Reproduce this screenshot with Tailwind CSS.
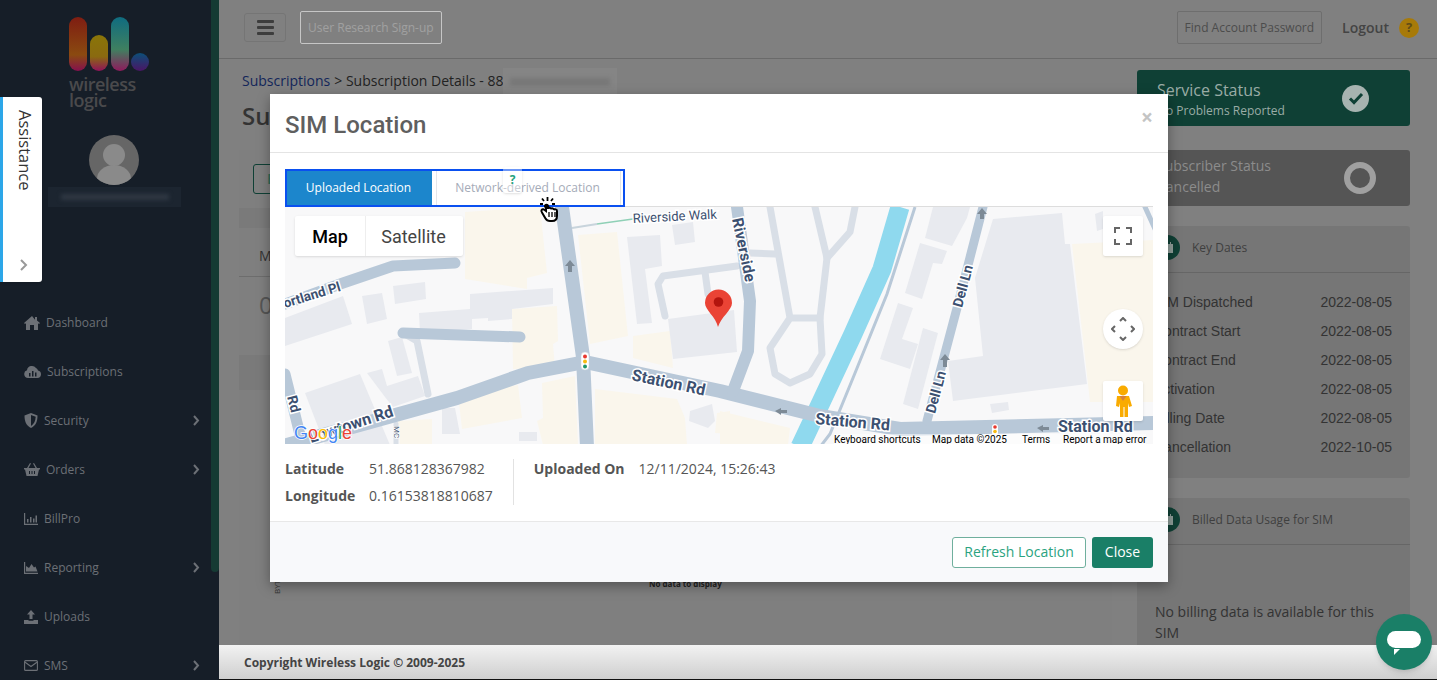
<!DOCTYPE html>
<html lang="en">
<head>
    <meta charset="UTF-8">
    <title>SIM Location</title>
    <script src="https://cdn.jsdelivr.net/npm/@tailwindcss/browser@4"></script>
</head>
<body class="font-['Open_Sans',sans-serif] text-[14px] text-[#333] bg-[#808080]">
<div class="relative flex w-[1437px] h-[680px] overflow-hidden">

    <!-- Sidebar -->
    <aside class="w-[219px] h-full shrink-0 bg-[#161e28] flex flex-col items-stretch relative overflow-hidden">
        <div class="absolute right-0 top-0 w-[8px] h-[572px] bg-[#153a33] rounded-b"></div>
        <div class="pt-[17px] pl-[69px] h-[135px] shrink-0">
            <svg class="block" width="80" height="54" viewBox="0 0 80 54">
                <defs>
                    <linearGradient id="b1" x1="0" y1="0" x2="0" y2="1"><stop offset="0" stop-color="#7f1d12"/><stop offset=".7" stop-color="#8a4a10"/><stop offset="1" stop-color="#85104e"/></linearGradient>
                    <linearGradient id="b2" x1="0" y1="0" x2="0" y2="1"><stop offset="0" stop-color="#8a7508"/><stop offset=".6" stop-color="#8a6a10"/><stop offset="1" stop-color="#90125a"/></linearGradient>
                    <linearGradient id="b3" x1="0" y1="0" x2="0" y2="1"><stop offset="0" stop-color="#0f6c80"/><stop offset=".6" stop-color="#3f8060"/><stop offset="1" stop-color="#8f1a5c"/></linearGradient>
                    <linearGradient id="b4" x1="0" y1="0" x2="0" y2="1"><stop offset="0" stop-color="#0c4f78"/><stop offset="1" stop-color="#4a1565"/></linearGradient>
                </defs>
                <rect x="0" y="0" width="18" height="54" rx="9" fill="url(#b1)"/>
                <rect x="21" y="18" width="18" height="36" rx="9" fill="url(#b2)"/>
                <rect x="42" y="0" width="18" height="54" rx="9" fill="url(#b3)"/>
                <circle cx="71" cy="45" r="9" fill="url(#b4)"/>
            </svg>
            <div class="text-[18px] leading-[16px] font-semibold text-[#4a4a4c] tracking-[-0.5px] mt-[5px]">wireless<br>logic</div>
        </div>
        <div class="flex justify-center pl-[9px] shrink-0">
            <div class="w-[50px] h-[50px] rounded-full bg-[#666] overflow-hidden">
                <svg width="50" height="50" viewBox="0 0 50 50"><circle cx="25" cy="20" r="11" fill="#8a8a8a"/><ellipse cx="25" cy="44" rx="17" ry="14" fill="#8a8a8a"/></svg>
            </div>
        </div>
        <div class="ml-[48px] w-[133px] shrink-0 mt-[2px] h-[20px] bg-[#1c2530] flex items-center justify-center">
            <div class="w-[108px] h-[6px] bg-[#2f3843] blur-[2px]"></div>
        </div>

        <nav class="mt-[91px] shrink-0 text-[12px] text-[#6c7076]">
            <a class="flex items-center h-[49px] pl-[24px] gap-[6px]">
                <svg width="16" height="14" viewBox="0 0 16 14" fill="#6c7076"><path d="M8 0 0 7l1 1 1-.8V14h4V9h4v5h4V7.200l1 .8 1-1-3-2.600V1h-2v2.700z"/></svg>
                <span>Dashboard</span>
            </a>
            <a class="flex items-center h-[49px] pl-[24px] gap-[6px]">
                <svg width="17" height="13" viewBox="0 0 17 13" fill="#6c7076"><path d="M4 13a4 4 0 0 1-1-7.800A5 5 0 0 1 12 3a4 4 0 0 1 2 2.500A3.800 3.800 0 0 1 13.500 13z"/><path d="M5 8h1.500v3.500H5zM8 6h1.500v5.500H8zM11 7.500h1.500v4H11z" fill="#161e28"/></svg>
                <span>Subscriptions</span>
            </a>
            <a class="flex items-center h-[49px] pl-[24px] gap-[6px] relative">
                <svg width="14" height="15" viewBox="0 0 14 15"><path d="M7 0 .5 2.500C.5 8 2 12.500 7 15c5-2.500 6.500-7 6.500-12.500z" fill="#6c7076"/><path d="M7 2v11c3-2 4.500-5 4.700-9.200z" fill="#161e28"/></svg>
                <span>Security</span>
                <svg class="absolute left-[192px]" width="8" height="11" viewBox="0 0 8 11"><path d="m2 1 4 4.500L2 10" fill="none" stroke="#6c7076" stroke-width="2"/></svg>
            </a>
            <a class="flex items-center h-[49px] pl-[24px] gap-[6px] relative">
                <svg width="16" height="13" viewBox="0 0 16 13" fill="#6c7076"><path d="M0 5h16v1.500h-1L13.500 13h-11L1 6.500H0zM3 5l3-5 1 .6L4.500 5zM13 5l-3-5-1 .6L11.500 5z"/><path d="M5 8h1v3H5zM7.500 8h1v3h-1zM10 8h1v3h-1z" fill="#161e28"/></svg>
                <span>Orders</span>
                <svg class="absolute left-[192px]" width="8" height="11" viewBox="0 0 8 11"><path d="m2 1 4 4.500L2 10" fill="none" stroke="#6c7076" stroke-width="2"/></svg>
            </a>
            <a class="flex items-center h-[49px] pl-[24px] gap-[6px]">
                <svg width="14" height="12" viewBox="0 0 14 12" fill="#6c7076"><path d="M0 0h1.200v10.800H14V12H0zM3 6h1.500v3.500H3zM6 4h1.500v5.500H6zM9 5.500h1.500v4H9zM11.500 2.500H13v7h-1.500z"/></svg>
                <span>BillPro</span>
            </a>
            <a class="flex items-center h-[49px] pl-[24px] gap-[6px] relative">
                <svg width="14" height="12" viewBox="0 0 14 12" fill="#6c7076"><path d="M0 0h1.200v10.800H14V12H0zM2 9.500V4l3 2 2.500-4L10 5.500l1.500-1 2 5z"/></svg>
                <span>Reporting</span>
                <svg class="absolute left-[192px]" width="8" height="11" viewBox="0 0 8 11"><path d="m2 1 4 4.500L2 10" fill="none" stroke="#6c7076" stroke-width="2"/></svg>
            </a>
            <a class="flex items-center h-[49px] pl-[24px] gap-[6px]">
                <svg width="14" height="14" viewBox="0 0 14 14" fill="#6c7076"><path d="M7 0 11 4.500H8.500V9h-3V4.500H3zM0 10h4.500v.8h5V10H14v4H0z"/></svg>
                <span>Uploads</span>
            </a>
            <a class="flex items-center h-[49px] pl-[24px] gap-[6px] relative">
                <svg width="14" height="11" viewBox="0 0 14 11" fill="none" stroke="#6c7076" stroke-width="1.100"><rect x=".6" y=".6" width="12.800" height="9.800" rx="1"/><path d="m.8 2 6.200 4.500L13.200 2"/></svg>
                <span>SMS</span>
                <svg class="absolute left-[192px]" width="8" height="11" viewBox="0 0 8 11"><path d="m2 1 4 4.500L2 10" fill="none" stroke="#6c7076" stroke-width="2"/></svg>
            </a>
        </nav>
    </aside>

    <!-- Main -->
    <div class="flex-1 flex flex-col min-w-0">
        <header class="h-[59px] shrink-0 border-b border-[#6a6a6a] flex items-center pl-[25px] pr-[18px] pb-[3px]">
            <button class="w-[42px] h-[29px] border border-[#757575] rounded-[3px] flex items-center justify-center">
                <svg width="17" height="15" viewBox="0 0 17 15" fill="#3d3d3d"><rect width="17" height="3" rx="1"/><rect y="6" width="17" height="3" rx="1"/><rect y="12" width="17" height="3" rx="1"/></svg>
            </button>
            <div class="ml-[14px] h-[33px] px-[7px] border border-[#c6c6c6] rounded-[2px] flex items-center text-[12px] text-[#a0a0a0]">User Research Sign-up</div>
            <div class="ml-auto h-[33px] px-[7px] border border-[#6e6e6e] rounded-[2px] flex items-center text-[12px] text-[#4c4c4c]">Find Account Password</div>
            <span class="ml-[20px] text-[14px] font-semibold text-[#444]">Logout</span>
            <span class="ml-[10px] w-[20px] h-[20px] rounded-full bg-[#a77a09] text-[#5f4c18] text-[13px] font-bold flex items-center justify-center">?</span>
        </header>

        <div class="flex-1 flex min-h-0 overflow-hidden pl-[20px] pr-[27px]">
            <div class="w-[873px] shrink-0">
                <div class="pt-[12px] pl-[3px] text-[14px] leading-[20px] text-[#222] flex">
                    <span class="text-[#13265a]">Subscriptions</span><span class="ml-[4px]">&gt; Subscription Details - 88</span>
                    <span class="w-[114px] h-[27px] -mt-[3px] bg-[#858585] flex items-center justify-center"><span class="w-[100px] h-[8px] bg-[#777] blur-[2px]"></span></span>
                </div>
                <div class="pl-[3px] mt-[5px] text-[24px] leading-[32px] font-semibold text-[#333]">Subscription</div>
                <div class="mt-[18px] bg-[#7a7a7a]">
                    <div class="h-[58px] bg-[#7f7f7f] flex items-center pl-[14px]">
                        <span class="w-[60px] h-[30px] border border-[#0f4035] rounded-[3px] pl-[13px] leading-[28px] text-[#2f6a58] font-semibold">E</span>
                    </div>
                    <div class="mt-[20px] h-[127px] bg-[#7f7f7f]">
                        <div class="h-[49px] pt-[6px] pl-[20px] border-b border-[#6d6d6d] flex items-center text-[14px] text-[#333]">Mobile</div>
                        <div class="pt-[12px] pl-[20px] text-[24px] leading-[32px] text-[#555]">0</div>
                    </div>
                    <div class="mt-[35px] h-[256px] bg-[#7f7f7f] relative">
                        <span class="absolute left-[26px] top-[187px] text-[8px] leading-[11px] text-[#333] -rotate-90">BYTES</span>
                        <span class="absolute left-[410px] top-[188px] text-[8px] font-bold text-[#222]">No data to display</span>
                    </div>
                </div>
            </div>
            <div class="w-[273px] ml-[25px] shrink-0 flex flex-col pt-[11px]">
                <div class="h-[56px] shrink-0 bg-[#0f4035] rounded-[3px] flex items-center pl-[20px] pr-[41px] justify-between">
                    <div class="text-[#9aaca6] pt-[4px]">
                        <div class="text-[16px] leading-[21px]">Service Status</div>
                        <div class="text-[12px] leading-[19px]">No Problems Reported</div>
                    </div>
                    <span class="w-[27px] h-[27px] rounded-full bg-[#a7b3b0] flex items-center justify-center">
                        <svg width="16" height="13" viewBox="0 0 16 13"><path d="m2 6.500 4 4 8-8.500" fill="none" stroke="#0f4035" stroke-width="3"/></svg>
                    </span>
                </div>
                <div class="h-[56px] mt-[24px] shrink-0 bg-[#555] rounded-[3px] flex items-center pl-[20px] pr-[34px] justify-between">
                    <div class="text-[#8c8c8c] text-[14px] leading-[21px] pb-[4px]">
                        <div>Subscriber Status</div>
                        <div>Cancelled</div>
                    </div>
                    <span class="w-[32px] h-[32px] rounded-full border-[6px] border-[#a0a0a0]"></span>
                </div>
                <div class="h-[252px] mt-[20px] shrink-0 bg-[#767676] rounded-[3px]">
                    <div class="h-[47px] pb-[3px] border-b border-[#666] flex items-center pl-[18px] gap-[12px]">
                        <span class="w-[25px] h-[25px] rounded-full bg-[#0f4035] flex items-center justify-center">
                            <svg width="10" height="11" viewBox="0 0 10 11" fill="#8f9f9a"><path d="M0 2h10v9H0zM2 0h1v2H2zM7 0h1v2H7z"/></svg>
                        </span>
                        <span class="text-[12px] text-[#3f3f3f]">Key Dates</span>
                    </div>
                    <div class="pt-[15px] pl-[17px] pr-[18px] font-['Liberation_Sans',sans-serif] text-[14px] text-[#333] leading-[29px]">
                        <div class="flex justify-between"><span>SIM Dispatched</span><span>2022-08-05</span></div>
                        <div class="flex justify-between"><span>Contract Start</span><span>2022-08-05</span></div>
                        <div class="flex justify-between"><span>Contract End</span><span>2022-08-05</span></div>
                        <div class="flex justify-between"><span>Activation</span><span>2022-08-05</span></div>
                        <div class="flex justify-between"><span>Billing Date</span><span>2022-08-05</span></div>
                        <div class="flex justify-between"><span>Cancellation</span><span>2022-10-05</span></div>
                    </div>
                </div>
                <div class="h-[180px] mt-[20px] shrink-0 bg-[#767676] rounded-[3px]">
                    <div class="h-[47px] pb-[3px] border-b border-[#666] flex items-center pl-[18px] gap-[12px]">
                        <span class="w-[25px] h-[25px] rounded-full bg-[#0f4035] flex items-center justify-center">
                            <svg width="10" height="11" viewBox="0 0 10 11" fill="#8f9f9a"><path d="M0 2h10v9H0zM2 0h1v2H2zM7 0h1v2H7z"/></svg>
                        </span>
                        <span class="text-[12px] text-[#3f3f3f]">Billed Data Usage for SIM</span>
                    </div>
                    <p class="pt-[56px] px-[18px] leading-[21px] text-[#333]">No billing data is available for this SIM</p>
                </div>
            </div>
        </div>

        <footer class="h-[35px] shrink-0 bg-linear-to-b from-[#f2f2f2] to-[#cfcfcf] border-b border-[#111] pl-[25px] pt-[1px] flex items-center text-[12px] font-bold text-[#444]">Copyright Wireless Logic © 2009-2025</footer>
    </div>

    <!-- Assistance tab -->
    <div class="absolute left-0 top-[97px] w-[42px] h-[185px] bg-white rounded-r-[3px] border-l-[3px] border-[#2ca6e8] shadow">
        <div class="absolute left-[9px] top-[13px] text-[16.500px] text-[#333] [writing-mode:vertical-rl]">Assistance</div>
        <svg class="absolute left-[16px] top-[162px]" width="9" height="12" viewBox="0 0 9 12"><path d="m2 1 5 5-5 5" fill="none" stroke="#999" stroke-width="2"/></svg>
    </div>

    <!-- Chat button -->
    <div class="absolute left-[1376px] top-[614px] w-[56px] h-[56px] rounded-full bg-[#1a7f67] shadow-md flex items-center justify-center">
        <svg width="34" height="26" viewBox="0 0 34 26"><rect y="2" width="34" height="17" rx="8.500" fill="#fff"/><path d="M7 26v-6h6z" fill="#fff"/></svg>
    </div>

    <!-- SIM Location modal -->
    <div class="absolute left-[270px] top-[94px] w-[898px] h-[488px] bg-white shadow-[0_4px_12px_rgba(0,0,0,0.35)] flex flex-col">
        <div class="h-[59px] shrink-0 border-b border-[#e4e4e4] flex items-center justify-between pl-[15px] pr-[15px]">
            <h2 class="font-['Roboto',sans-serif] font-medium text-[24px] text-[#5f5f5f] pt-[3px]">SIM Location</h2>
            <span class="text-[21px] font-bold text-[#c4c4c4] -mt-[10px]">×</span>
        </div>
        <div class="flex-1 relative px-[15px] pt-[16px]">
            <!-- tabs -->
            <div class="relative w-[340px] h-[38px] border-2 border-[#0a50f0] flex bg-white z-10">
                <span class="w-[145px] h-full pr-[2px] bg-[#1c86cc] text-white text-[12px] flex items-center justify-center">Uploaded Location</span>
                <span class="ml-[4px] w-[185px] h-full pr-[2px] border-x border-[#e4e6ea] text-[#a5abb8] text-[12px] flex items-center justify-center">Network-derived Location</span>
                <span class="absolute left-[216px] -top-[4px] w-[19px] h-[26px] bg-white/40 rounded-[3px] shadow-sm text-center text-[12px] font-bold text-[#1fa37d] leading-[26px]">?</span>
            </div>

            <!-- map -->
            <div class="relative w-[868px] h-[238px] -mt-[1px] border-t border-[#ddd] overflow-hidden bg-[#f8f8f9]">
                <svg class="absolute inset-0" width="868" height="238" viewBox="0 0 868 238" font-family="Roboto, sans-serif">
                    <!-- sand blocks -->
                    <g fill="#faf6ec">
                        <path d="M180 5 255 0 262 66 242 71 242 82 180 72z"/>
                        <path d="M227 102 272 99 273 134 268 137 270 161 228 162z"/>
                        <path d="M293 28 332 25 343 129 305 137z"/>
                        <path d="M348 129 385 124 388 161 348 151z"/>
                        <path d="M173 187 233 178 237 211 177 222z"/>
                        <path d="M257 176 290 169 293 238 258 238 252 214 258 211z"/>
                        <path d="M113 214 147 212 147 238 115 238z"/>
                        <path d="M310 182 392 192 400 211 402 238 310 238z"/>
                        <path d="M432 206 445 204 445 227 430 226z"/>
                        <path d="M787 37 868 33 868 195 805 195 800 150z"/>
                        <path d="M435 204 505 221 503 238 435 238z"/>
                    </g>
                    <!-- buildings -->
                    <g fill="#e8eaef">
                        <path d="M708 12 777 6 780 37 785 37 802 177 668 194 663 154 698 149 690 71z"/>
                        <path d="M0 111 58 89 67 117 0 139z"/>
                        <path d="M77 89 97 86 102 112 82 117z"/>
                        <path d="M108 79 140 75 141 92 110 97z"/>
                        <path d="M134 106 185 102 185 87 268 81 268 97 227 102 227 112 203 114 203 111 187 112 187 122 135 126z"/>
                        <path d="M103 134 117 130 127 166 112 169z"/>
                        <path d="M20 186 75 167 105 238 40 238z"/>
                        <path d="M82 166 97 162 102 179 133 169 140 189 108 200 100 190z"/>
                        <path d="M157 201 170 201 175 227 157 227z"/>
                        <path d="M234 225 252 225 252 234 234 234z"/>
                        <path d="M405 204 427 197 430 214 423 221 404 214z"/>
                        <path d="M383 112 449 103 452 145 388 152z"/>
                        <path d="M342 30 375 28 377 59 360 62 367 116 352 117z"/>
                        <path d="M387 18 408 15 410 35 390 38z"/>
                        <path d="M648 0 685 0 682 11 667 39 640 31z"/>
                        <path d="M635 36 662 44 657 57 648 56 637 92 620 86z"/>
                        <path d="M613 96 628 101 617 132 633 137 625 162 595 152z"/>
                        <path d="M638 121 653 126 633 202 618 197z"/>
                        <path d="M705 197 723 195 724 203 707 206z"/>
                        <path d="M810 7 818 4 818 22 812 24z"/>
                    </g>
                    <!-- light service roads -->
                    <g fill="none" stroke="#d9dfe7" stroke-width="7" stroke-linecap="round" stroke-linejoin="round">
                        <path d="M485 0 505 111 485 141 490 167 505 176 525 167 537 147 535 111 505 111"/>
                        <path d="M530 0 542 51 535 111"/>
                        <path d="M570 0 565 25 542 51"/>
                        <path d="M465 46 490 47"/>
                        <path d="M380 109 373 77 378 69 452 59"/>
                        <path d="M420 65 423 87"/>
                        <path d="M118 126 132 134 143 187"/>
                        <path d="M111 217V238" stroke-width="5"/>
                    </g>
                    <!-- river -->
                    <path d="M615 0 597 62 568 127 532 204 515 240" fill="none" stroke="#8fd9ee" stroke-width="19"/>
                    <path d="M630 0 602 87 568 171 545 227 535 240" fill="none" stroke="#b8c8d8" stroke-width="3"/>
                    <!-- roads -->
                    <g fill="none" stroke="#b8c8d8" stroke-linejoin="round" stroke-linecap="round">
                        <path d="M277 0 298 150 302 240" stroke-width="14"/>
                        <path d="M-5 240 172 191 243 166 300 155 435 184 535 209 615 222 870 216" stroke-width="14"/>
                        <path d="M0 97 58 76 108 59 170 56" stroke-width="11"/>
                        <path d="M118 126 235 130" stroke-width="11"/>
                        <path d="M452 0 465 94 463 144 448 184" stroke-width="12"/>
                        <path d="M698 0 672 101 642 214" stroke-width="9"/>
                        <path d="M0 167 18 240" stroke-width="11"/>
                        <path d="M860 0 870 22" stroke-width="5"/>
                    </g>
                    <path d="M287 21 312 17" fill="none" stroke="#c8d4dc" stroke-width="2"/>
                    <path d="M312 17 348 12" fill="none" stroke="#8fd0b6" stroke-width="1.500"/>
                    <!-- one-way arrows -->
                    <g fill="#7d8a96">
                        <path d="m285 53 5 6h-3v6h-4v-6h-3z"/>
                        <path d="m697 1 5 6h-3v5h-4v-5h-3z"/>
                        <path d="m660 147 5 6h-3v7h-4v-7h-3z"/>
                        <path d="m490 204 6-3v2h6v3h-6v2z"/>
                        <path d="m752 221 6-3v2h6v3h-6v2z"/>
                    </g>
                    <!-- labels -->
                    <g font-weight="700" fill="#3c5070" stroke="#fff" stroke-width="3" paint-order="stroke">
                        <text transform="translate(348 16) rotate(-3)" font-weight="400" font-size="13">Riverside Walk</text>
                        <text transform="translate(0 101) rotate(-17)" font-size="13.500">ortland Pl</text>
                        <text transform="translate(2 190) rotate(75)" font-size="14">Rd</text>
                        <text transform="translate(26 236) rotate(-18)" font-size="16">Lowtown Rd</text>
                        <text transform="translate(346 173) rotate(12)" font-size="16">Station Rd</text>
                        <text transform="translate(447 12) rotate(78)" font-size="15.500">Riverside</text>
                        <text transform="translate(530 217) rotate(5)" font-size="16">Station Rd</text>
                        <text transform="translate(773 225)" font-size="16">Station Rd</text>
                        <text transform="translate(677 101) rotate(-75)" font-size="14">Dell Ln</text>
                        <text transform="translate(650 207) rotate(-75)" font-size="14">Dell Ln</text>
                        <text transform="translate(109 219) rotate(90)" font-size="8" font-weight="400" stroke-width="1.500">MC</text>
                    </g>
                    <!-- traffic lights -->
                    <rect x="296" y="145" width="8" height="18" rx="4" fill="#fff" stroke="#c8d0d8" stroke-width=".5"/>
                    <circle cx="300" cy="149.500" r="2" fill="#e8392f"/><circle cx="300" cy="154.500" r="2" fill="#f8bb10"/><circle cx="300" cy="159.500" r="2" fill="#20966a"/>
                    <rect x="707" y="217" width="6" height="12" rx="3" fill="#fff"/><circle cx="710" cy="220" r="1.800" fill="#e8392f"/><circle cx="710" cy="224.500" r="1.800" fill="#f8bb10"/>
                    <!-- pin -->
                    <path d="M433 120c-2-10-13-17-13-24a13 13 0 1 1 27 0c0 7-11 14-14 24z" fill="#ea4335"/>
                    <circle cx="433.500" cy="95" r="4.800" fill="#b3140e"/>
                    <!-- google -->
                    <text x="9" y="232" font-family="Liberation Sans, sans-serif" font-size="18" stroke="#fff" stroke-width="1.500" paint-order="stroke"><tspan fill="#4285f4">G</tspan><tspan fill="#ea4335">o</tspan><tspan fill="#fbbc05">o</tspan><tspan fill="#4285f4">g</tspan><tspan fill="#34a853">l</tspan><tspan fill="#ea4335">e</tspan></text>
                </svg>

                <!-- map controls -->
                <div class="absolute left-[10px] top-[9px] h-[40px] bg-white rounded-[2px] shadow flex items-center font-['Roboto',sans-serif] text-[18px]">
                    <span class="w-[70px] text-center font-medium text-black">Map</span>
                    <span class="w-px h-full bg-[#eee]"></span>
                    <span class="w-[97px] pr-[2px] text-center text-[#444]">Satellite</span>
                </div>
                <div class="absolute left-[818px] top-[9px] w-[40px] h-[40px] bg-white rounded-[2px] shadow flex items-center justify-center">
                    <svg width="18" height="18" viewBox="0 0 18 18" fill="none" stroke="#666" stroke-width="2"><path d="M1 6V1h5M12 1h5v5M17 12v5h-5M6 17H1v-5"/></svg>
                </div>
                <div class="absolute left-[818px] top-[102px] w-[40px] h-[40px] bg-white rounded-full shadow flex items-center justify-center">
                    <svg width="24" height="24" viewBox="0 0 24 24" fill="none" stroke="#666" stroke-width="2"><path d="m9 4 3-3 3 3M9 20l3 3 3-3M4 9l-3 3 3 3M20 9l3 3-3 3"/></svg>
                </div>
                <div class="absolute left-[818px] top-[174px] w-[40px] h-[40px] bg-white rounded-[2px] shadow flex items-center justify-center">
                    <svg width="18" height="32" viewBox="0 0 18 32" fill="#f9ab00"><circle cx="9" cy="5.500" r="5"/><path d="M3 11h12l3 10-3 1-1-4v14h-3.500V22h-1v10H6V18l-1 4-3-1z"/><path d="M5.500 11h7L9 16z" fill="#d8803a"/></svg>
                </div>
                <div class="absolute left-[549px] top-[227px] h-[11px] flex items-center bg-white/50 font-['Roboto',sans-serif] text-[10px] leading-[11px] text-black whitespace-nowrap">
                    <span class="w-[98px]">Keyboard shortcuts</span>
                    <span class="w-[90px]">Map data ©2025</span>
                    <span class="w-[41px]">Terms</span>
                    <span>Report a map error</span>
                </div>
            </div>

            <!-- coordinates -->
            <div class="mt-[15px] flex text-[14px] leading-[27px] text-[#555]">
                <div class="pr-[20px] border-r border-[#e2e2e2] h-[46px]">
                    <div class="grid grid-cols-[84px_auto] -mt-[4px]">
                        <span class="font-bold">Latitude</span><span>51.868128367982</span>
                        <span class="font-bold">Longitude</span><span>0.16153818810687</span>
                    </div>
                </div>
                <div class="pl-[20px] -mt-[4px] flex gap-[14px]">
                    <span class="font-bold">Uploaded On</span><span>12/11/2024, 15:26:43</span>
                </div>
            </div>
        </div>
        <div class="h-[61px] shrink-0 bg-[#f8f9fb] border-t border-[#e8e8e8] flex items-center justify-end pr-[15px] gap-[6px]">
            <button class="h-[31px] w-[134px] pb-[1px] border border-[#6faf9d] rounded-[3px] bg-white text-[14px] text-[#2ba37f]">Refresh Location</button>
            <button class="h-[31px] w-[61px] pb-[1px] rounded-[3px] bg-[#1a7f67] text-[14px] text-white">Close</button>
        </div>
    </div>

    <!-- hand cursor -->
    <svg class="absolute z-20 left-[538px] top-[197px]" width="22" height="25" viewBox="0 0 22 25">
        <path d="M8 9.500V14L6 12.500c-2-1-3.500 1-2 3l3.500 6c1 1.800 2.500 2.500 4.500 2.500h2c3 0 5-2 5-5v-5c0-2-2.500-2-3-1 0-2-2.500-2-3-.8 0-2-2.500-2-3-.5V9.500c0-2.500-3-2.500-3 0z" fill="#fff" stroke="#000" stroke-width="2"/>
        <path d="M11 15v5M14 15v5M17 15v5" stroke="#000" stroke-width="1.300"/>
        <path d="M4 1.500l2 2.500M9.500 0v4M15 1.500l-2 2.500M2 7h3M14 7h3" stroke="#000" stroke-width="1.800"/>
    </svg>
</div>
</body>
</html>
